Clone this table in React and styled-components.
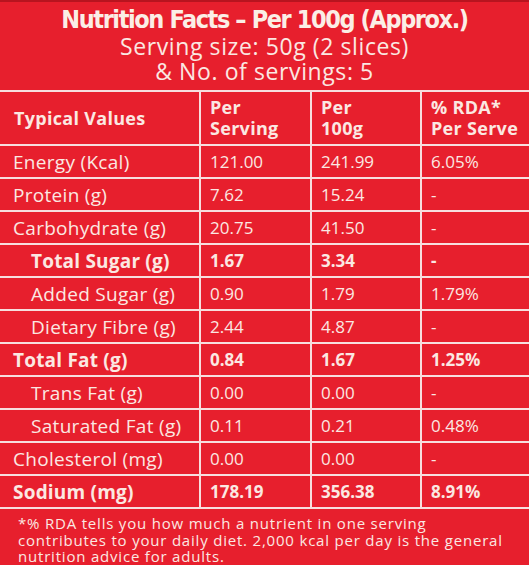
import React from "react";
import styled, { createGlobalStyle } from "styled-components";

const rows = [
  { name: "Energy (Kcal)", serving: "121.00", per100: "241.99", rda: "6.05%" },
  { name: "Protein (g)", serving: "7.62", per100: "15.24", rda: "-" },
  { name: "Carbohydrate (g)", serving: "20.75", per100: "41.50", rda: "-" },
  { name: "Total Sugar (g)", serving: "1.67", per100: "3.34", rda: "-", bold: true, indent: true },
  { name: "Added Sugar (g)", serving: "0.90", per100: "1.79", rda: "1.79%", indent: true },
  { name: "Dietary Fibre (g)", serving: "2.44", per100: "4.87", rda: "-", indent: true },
  { name: "Total Fat (g)", serving: "0.84", per100: "1.67", rda: "1.25%", bold: true },
  { name: "Trans Fat (g)", serving: "0.00", per100: "0.00", rda: "-", indent: true },
  { name: "Saturated Fat (g)", serving: "0.11", per100: "0.21", rda: "0.48%", indent: true },
  { name: "Cholesterol (mg)", serving: "0.00", per100: "0.00", rda: "-" },
  { name: "Sodium (mg)", serving: "178.19", per100: "356.38", rda: "8.91%", bold: true },
];

const GlobalStyle = createGlobalStyle`
  body {
    margin: 0;
    background: #e71f2d;
  }
`;

const Label = () => {
  return (
    <Panel>
      <GlobalStyle />
      <Heading>
        <Title>Nutrition Facts – Per 100g (Approx.)</Title>
        <Sub>Serving size: 50g (2 slices)</Sub>
        <Sub>&amp; No. of servings: 5</Sub>
      </Heading>

      <Grid>
        <HeadCell>Typical Values</HeadCell>
        <HeadCell>Per<br />Serving</HeadCell>
        <HeadCell>Per<br />100g</HeadCell>
        <HeadCell>% RDA*<br />Per Serve</HeadCell>

        {rows.map(row => (
          <React.Fragment key={row.name}>
            <NameCell $bold={row.bold} $indent={row.indent}>{row.name}</NameCell>
            <Cell $bold={row.bold}>{row.serving}</Cell>
            <Cell $bold={row.bold}>{row.per100}</Cell>
            <Cell $bold={row.bold}>{row.rda}</Cell>
          </React.Fragment>
        ))}
      </Grid>

      <Note>
        *% RDA tells you how much a nutrient in one serving<br />
        contributes to your daily diet. 2,000 kcal per day is the general<br />
        nutrition advice for adults.
      </Note>
    </Panel>
  );
};

const Panel = styled.div`
  width: 529px;
  height: 565px;
  overflow: hidden;
  background: #e71f2d;
  border-top: 2px solid #b8141f;
  box-sizing: border-box;
  color: #fbe8e2;
  font-family: "Open Sans", "Lato", sans-serif;
`;

const Heading = styled.div`
  display: flex;
  flex-direction: column;
  align-items: center;
  height: 88px;
`;

const Title = styled.h1`
  margin: 3px 0 0;
  font-family: "DejaVu Sans Condensed", "DejaVu Sans", sans-serif;
  font-weight: 700;
  font-size: 25px;
  line-height: 29px;
  letter-spacing: -1.4px;
  color: #fbeee6;
`;

const Sub = styled.div`
  font-size: 23px;
  line-height: 25px;
  letter-spacing: 0.6px;
  font-weight: 400;
`;

const Grid = styled.div`
  display: grid;
  grid-template-columns: 199px 109px 108px 1fr;
  grid-template-rows: 52px;
  grid-auto-rows: 31px;
  gap: 2px;
  padding: 2px 0;
  background: #f7dede;
`;

const HeadCell = styled.div`
  background: #e71f2d;
  display: flex;
  align-items: center;
  padding-left: 9px;
  font-weight: 700;
  font-size: 18px;
  line-height: 21px;
  letter-spacing: 0.3px;

  &:first-child {
    padding-left: 14px;
  }
`;

const Cell = styled.div`
  background: #e71f2d;
  display: flex;
  align-items: center;
  padding-left: 9px;
  font-size: 17px;
  font-weight: ${p => (p.$bold ? 700 : 400)};
`;

const NameCell = styled(Cell)`
  padding-left: ${p => (p.$indent ? "31px" : "13px")};
  font-size: 19px;
  letter-spacing: ${p => (p.$bold ? "0.2px" : "0.3px")};
`;

const Note = styled.p`
  margin: 6px 0 0 18px;
  font-size: 15px;
  line-height: 16.5px;
  letter-spacing: 0.8px;
  font-weight: 500;
`;

export default Label;
